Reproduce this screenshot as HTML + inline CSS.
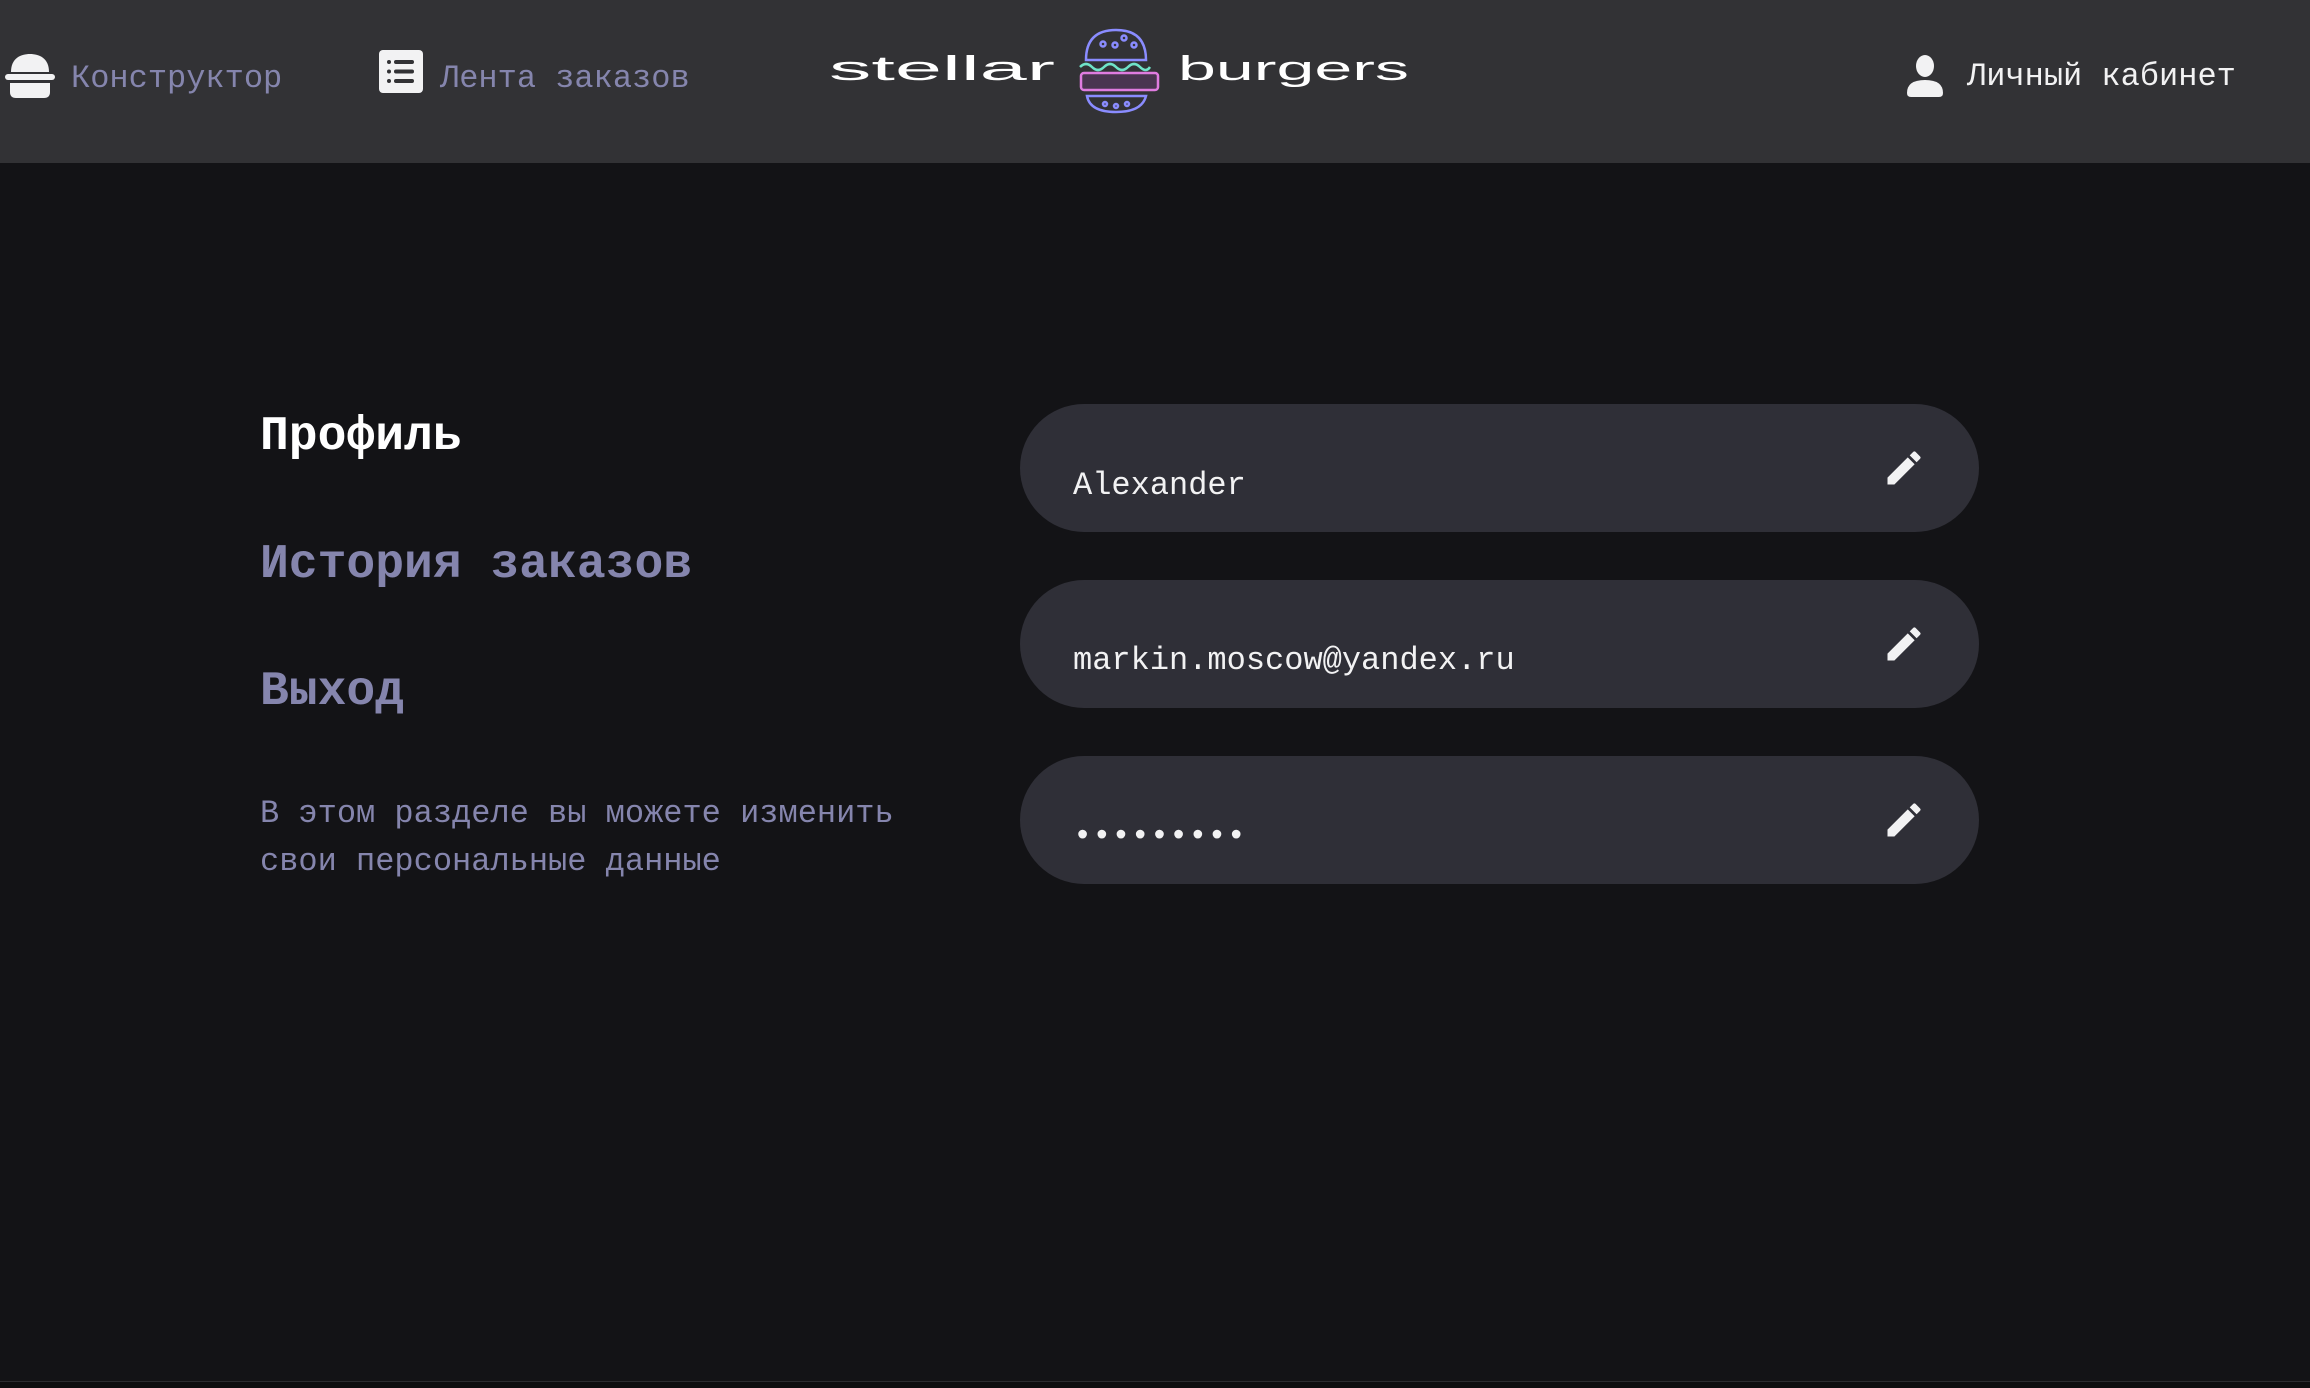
<!DOCTYPE html>
<html><head><meta charset="utf-8"><style>
*{margin:0;padding:0;box-sizing:border-box}
body{width:2310px;height:1388px;background:#131316;position:relative;overflow:hidden;font-family:"Liberation Mono",monospace;color:#f2f2f3}
.a{position:absolute;line-height:1;white-space:pre}
.hdr{position:absolute;left:0;top:0;width:2310px;height:163px;background:#323235}
.g{color:#8585AD}
.inp{position:absolute;left:1020px;width:959px;height:128px;border-radius:64px;background:#2f2f37}
</style></head><body>
<div class="hdr"></div>
<svg class="a" style="left:5px;top:54px" width="50" height="44" viewBox="0 0 50 44">
<path d="M6 18 C6 4 16 0 25 0 C34 0 44 4 44 18 Z" fill="#f2f2f3"/>
<rect x="0" y="20" width="50" height="6" rx="3" fill="#f2f2f3"/>
<path d="M5 29 H45 V38 Q45 44 39 44 H11 Q5 44 5 38 Z" fill="#f2f2f3"/>
</svg>
<div class="a g" style="left:71px;top:63px;font-size:32px">Конструктор</div>
<svg class="a" style="left:379px;top:50px" width="44" height="43" viewBox="0 0 44 43">
<rect width="44" height="43" rx="4" fill="#f2f2f3"/>
<g fill="#323235"><circle cx="10" cy="12" r="2"/><circle cx="10" cy="21.5" r="2"/><circle cx="10" cy="31" r="2"/>
<rect x="15" y="10" width="20" height="4" rx="2"/><rect x="15" y="19.5" width="20" height="4" rx="2"/><rect x="15" y="29" width="20" height="4" rx="2"/></g>
</svg>
<div class="a g" style="left:440px;top:63px;font-size:32px">Лента заказов</div>

<svg class="a" style="left:820px;top:20px" width="600" height="100" viewBox="820 20 600 100">
<text x="829" y="80" font-family="Liberation Sans, sans-serif" font-size="34" fill="#fff" textLength="226" lengthAdjust="spacingAndGlyphs">stellar</text>
<text x="1178" y="80" font-family="Liberation Sans, sans-serif" font-size="34" fill="#fff" textLength="231" lengthAdjust="spacingAndGlyphs">burgers</text>
<g fill="none" stroke-width="2.5">
<path d="M1086 60 Q1086 30 1116 30 Q1146 30 1146 60 Z" stroke="#8a8cff"/>
<circle cx="1103" cy="44" r="2.5" stroke="#8a8cff"/><circle cx="1115" cy="45" r="2.5" stroke="#8a8cff"/><circle cx="1124" cy="38" r="2.5" stroke="#8a8cff"/><circle cx="1134" cy="45" r="2.5" stroke="#8a8cff"/>
<path d="M1080 67 q6 -6 12 0 t12 0 t12 0 t12 0 t12 0 t10 0" stroke="#6fe3c8"/>
<rect x="1081" y="73" width="77" height="17" rx="3" stroke="#e07ce0" fill="#4a3550"/>
<path d="M1087 96 H1146 Q1142 112 1116 112 Q1090 112 1087 96 Z" stroke="#8a8cff"/>
<circle cx="1105" cy="104" r="2" stroke="#8a8cff"/><circle cx="1116" cy="106" r="2" stroke="#8a8cff"/><circle cx="1127" cy="104" r="2" stroke="#8a8cff"/>
</g>
</svg>

<svg class="a" style="left:1907px;top:55px" width="36" height="42" viewBox="0 0 36 42">
<ellipse cx="18" cy="11" rx="9" ry="11" fill="#f2f2f3"/>
<path d="M0 38 Q0 25 18 25 Q36 25 36 38 Q36 42 32 42 H4 Q0 42 0 38 Z" fill="#f2f2f3"/>
</svg>
<div class="a" style="left:1967px;top:61px;font-size:32px">Личный кабинет</div>

<div class="a" style="left:260px;top:413px;font-size:48px;font-weight:bold;color:#fff">Профиль</div>
<div class="a g" style="left:260px;top:541px;font-size:48px;font-weight:bold">История заказов</div>
<div class="a g" style="left:260px;top:668px;font-size:48px;font-weight:bold">Выход</div>
<div class="a g" style="left:260px;top:790px;font-size:32px;line-height:48px">В этом разделе вы можете изменить
свои персональные данные</div>

<div class="inp" style="top:404px"></div>
<div class="inp" style="top:580px"></div>
<div class="inp" style="top:756px"></div>
<div class="a" style="left:1073px;top:470px;font-size:32px">Alexander</div>
<div class="a" style="left:1073px;top:645px;font-size:32px">markin.moscow@yandex.ru</div>
<div class="a" style="left:1073px;top:821px;font-size:32px">•••••••••</div>
<svg class="a" style="left:1882px;top:446px" width="44" height="44" viewBox="0 0 24 24"><path fill="#f2f2f3" d="M3 17.25V21h3.75L17.81 9.94l-3.75-3.75L3 17.25zM20.71 7.04a1 1 0 0 0 0-1.41l-2.34-2.34a1 1 0 0 0-1.41 0l-1.83 1.83 3.75 3.75 1.83-1.83z"/></svg>
<svg class="a" style="left:1882px;top:622px" width="44" height="44" viewBox="0 0 24 24"><path fill="#f2f2f3" d="M3 17.25V21h3.75L17.81 9.94l-3.75-3.75L3 17.25zM20.71 7.04a1 1 0 0 0 0-1.41l-2.34-2.34a1 1 0 0 0-1.41 0l-1.83 1.83 3.75 3.75 1.83-1.83z"/></svg>
<svg class="a" style="left:1882px;top:798px" width="44" height="44" viewBox="0 0 24 24"><path fill="#f2f2f3" d="M3 17.25V21h3.75L17.81 9.94l-3.75-3.75L3 17.25zM20.71 7.04a1 1 0 0 0 0-1.41l-2.34-2.34a1 1 0 0 0-1.41 0l-1.83 1.83 3.75 3.75 1.83-1.83z"/></svg>

<div class="a" style="left:0;top:1381px;width:2310px;height:1px;background:#2c2c30"></div>
<div class="a" style="left:0;top:1382px;width:2310px;height:6px;background:#0e0e10"></div>
</body></html>
